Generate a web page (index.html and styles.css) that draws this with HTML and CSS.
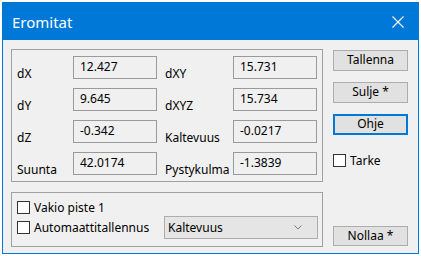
FILE: index.html
```html
<!DOCTYPE html>
<html lang="fi">
<head>
    <meta charset="UTF-8">
    <title>Eromitat</title>
    <link rel="stylesheet" href="styles.css">
</head>
<body>
    <div class="window">
        <div class="titlebar">
            <span class="title">Eromitat</span>
            <svg class="close" width="12" height="12" viewBox="0 0 12 12">
                <path d="M0.5 0.5 L11.5 11.5 M11.5 0.5 L0.5 11.5" stroke="#fff" stroke-width="1.1" fill="none"/>
            </svg>
        </div>

        <div class="client">
            <div class="left">
                <div class="group values">
                    <span class="label">dX</span>
                    <span class="field">12.427</span>
                    <span class="label second">dXY</span>
                    <span class="field">15.731</span>

                    <span class="label">dY</span>
                    <span class="field">9.645</span>
                    <span class="label second">dXYZ</span>
                    <span class="field">15.734</span>

                    <span class="label">dZ</span>
                    <span class="field">-0.342</span>
                    <span class="label second">Kaltevuus</span>
                    <span class="field">-0.0217</span>

                    <span class="label">Suunta</span>
                    <span class="field">42.0174</span>
                    <span class="label second">Pystykulma</span>
                    <span class="field">-1.3839</span>
                </div>

                <div class="group options">
                    <label class="check"><span class="box"></span>Vakio piste 1</label>
                    <div class="option-row">
                        <label class="check"><span class="box"></span>Automaattitallennus</label>
                        <div class="combo">
                            <span>Kaltevuus</span>
                            <svg width="8" height="5" viewBox="0 0 8 5">
                                <path d="M0.5 0.5 L4 4 L7.5 0.5" stroke="#7a7a7a" stroke-width="1" fill="none"/>
                            </svg>
                        </div>
                    </div>
                </div>
            </div>

            <div class="right">
                <button class="btn">Tallenna</button>
                <button class="btn">Sulje *</button>
                <button class="btn focused">Ohje</button>
                <label class="check tarke"><span class="box"></span>Tarke</label>
                <button class="btn reset">Nollaa *</button>
            </div>
        </div>
    </div>
</body>
</html>
```

FILE: styles.css
```css
* {
    margin: 0;
    padding: 0;
    box-sizing: border-box;
}

body {
    background-color: #ffffff;
    padding: 2px 0 0 2px;
    font-family: 'Noto Sans', sans-serif;
    font-size: 12px;
    line-height: 15px;
    color: #000000;
}

.window {
    width: 417px;
    height: 252px;
    border: 1px solid #0078d7;
    background-color: #f0f0f0;
    display: flex;
    flex-direction: column;
}

.titlebar {
    height: 37px;
    background-color: #0078d7;
    color: #ffffff;
    display: flex;
    align-items: center;
    justify-content: space-between;
    padding: 0 14px 0 9px;
}

.title {
    font-size: 15px;
    line-height: 18px;
    padding-top: 1px;
}

.close {
    margin-top: 1px;
}

.client {
    flex: 1;
    display: flex;
    gap: 10px;
    padding: 9px 9px 6px 8px;
}

.left {
    width: 312px;
    display: flex;
    flex-direction: column;
    gap: 10px;
}

.group {
    border: 1px solid #a0a0a0;
}

.values {
    display: grid;
    grid-template-columns: 56px 84px 76px 84px;
    grid-auto-rows: 23px;
    row-gap: 9px;
    padding: 6px 5px 6px 5px;
}

.label {
    align-self: end;
    margin-bottom: -2px;
    white-space: nowrap;
}

.label.second {
    padding-left: 8px;
}

.field {
    height: 23px;
    border: 1px solid #9a9a9a;
    background-color: #f0f0f0;
    padding: 2px 6px 0 6px;
}

.options {
    flex: 1;
    display: flex;
    flex-direction: column;
    padding: 7px 4px 0 5px;
    gap: 1px;
}

.option-row {
    display: flex;
    align-items: center;
}

.check {
    display: flex;
    align-items: center;
    gap: 4px;
    white-space: nowrap;
}

.box {
    width: 13px;
    height: 13px;
    border: 1px solid #333333;
    background-color: #ffffff;
}

.combo {
    margin-left: auto;
    width: 154px;
    height: 23px;
    border: 1px solid #adadad;
    background-color: #e5e5e5;
    display: flex;
    align-items: center;
    justify-content: space-between;
    padding: 0 15px 1px 3px;
}

.right {
    width: 75px;
    display: flex;
    flex-direction: column;
    padding-top: 1px;
}

.btn {
    height: 21px;
    border: 1px solid #adadad;
    background-color: #e1e1e1;
    font-family: inherit;
    font-size: 12px;
    line-height: 15px;
    color: #000000;
    margin-bottom: 11px;
    padding-bottom: 2px;
}

.btn.focused {
    border: 2px solid #0078d7;
}

.tarke {
    margin-top: 7px;
}

.btn.reset {
    margin-top: auto;
    margin-bottom: 1px;
    height: 20px;
}
```
